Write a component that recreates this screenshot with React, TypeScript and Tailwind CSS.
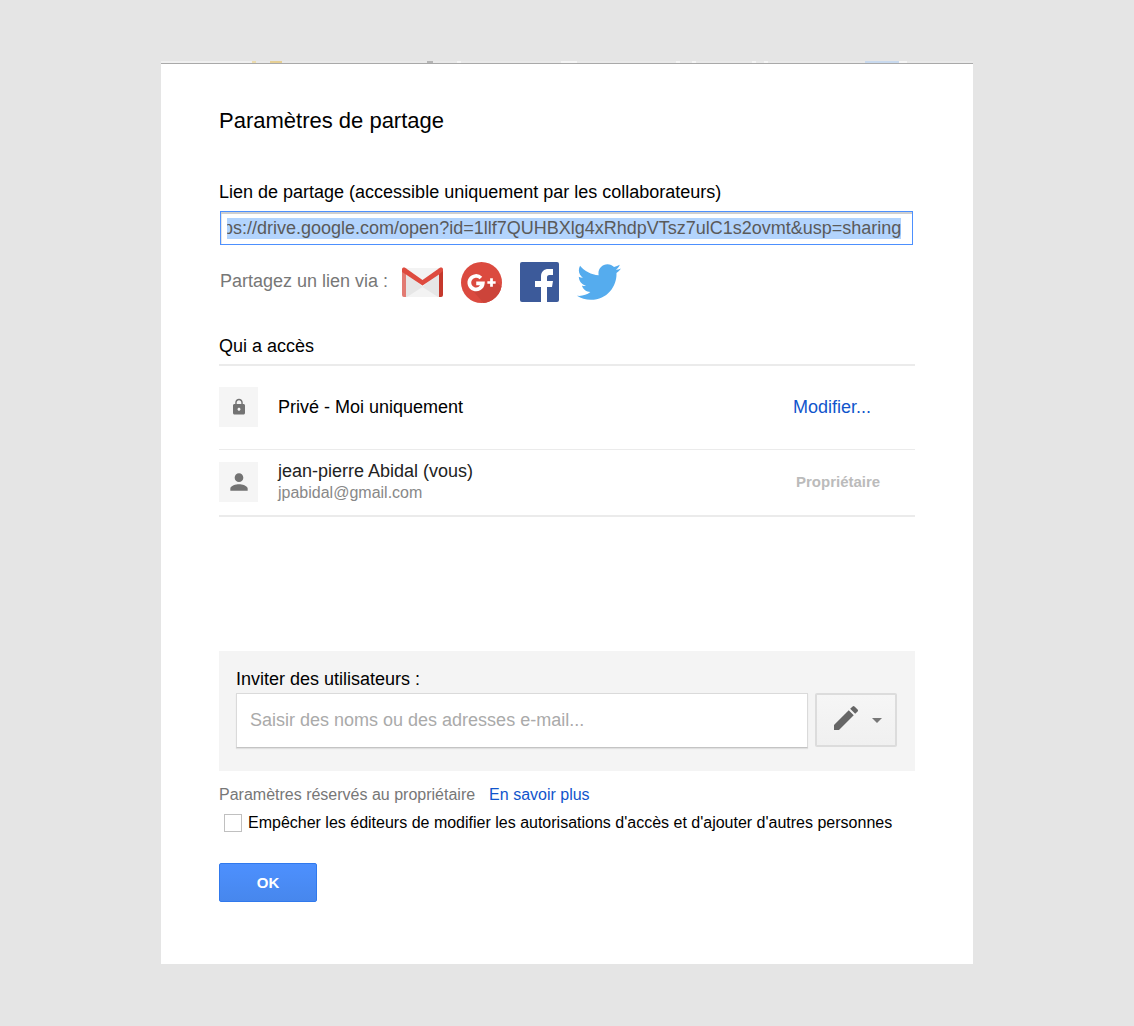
import React, { useEffect, useRef } from "react";
import { FaTwitter } from "react-icons/fa";
import { MdEdit, MdLock, MdPerson } from "react-icons/md";

const shareUrl =
  "ps://drive.google.com/open?id=1llf7QUHBXlg4xRhdpVTsz7ulC1s2ovmt&usp=sharing";

function GmailIcon() {
  return (
    <svg viewBox="0 0 41 30" className="h-[30px] w-[41px]" aria-hidden="true">
      <rect x="1" y="1" width="39" height="29" rx="1" fill="#e6e6e6" />
      <path d="M5 30 20.500 20 36 30z" fill="#f3f3f3" />
      <path d="M5 6 20.500 20 36 6V1H5z" fill="#f3f3f3" />
      <path d="M0 2v26a2 2 0 0 0 2 2h2V5z" fill="#e27b73" />
      <path d="M41 2v26a2 2 0 0 1-2 2h-2V5z" fill="#c5382c" />
      <path
        d="M0 2.500C0 .5 2 0 3.500 1L20.500 13 37.500 1C39 0 41 .5 41 2.500V4L37 7.500 20.500 18.500 4 7.500 0 5z"
        fill="#de4b3f"
      />
    </svg>
  );
}

function GooglePlusIcon() {
  return (
    <svg viewBox="0 0 42 42" className="h-[41px] w-[41px]" aria-hidden="true">
      <circle cx="21" cy="21" r="21" fill="#db4a3f" />
      <path d="m10 27 13 14.900A21 21 0 0 0 41.500 25l-6-5z" fill="#cc443a" />
      <path
        d="M20.400 16.400A6.900 6.900 0 1 0 22.300 22H15.600"
        fill="none"
        stroke="#fff"
        strokeWidth="3.800"
      />
      <path d="M27 21h8.500M31.250 16.750v8.500" stroke="#fff" strokeWidth="2.800" />
    </svg>
  );
}

function FacebookIcon() {
  return (
    <svg viewBox="0 0 39 40" className="h-10 w-[39px]" aria-hidden="true">
      <rect width="39" height="40" rx="2" fill="#3c5a9a" />
      <path
        d="M21 40V25h-6v-6h6v-4.500C21 9.500 24 7 28.500 7H33v6h-3.500c-2 0-2.500 1-2.500 2.500V19h6l-1 6h-5v15z"
        fill="#fff"
      />
    </svg>
  );
}

// Slice of the page still visible above the dialog
function PageSliver() {
  return (
    <div className="flex h-0.5 overflow-hidden bg-[#e9e9e9]" aria-hidden="true">
      <span className="w-[91px] bg-[#f0f0f0]" />
      <span className="w-1 bg-[#ecdcae]" />
      <span className="ml-3.5 w-3 bg-[#e6cf94]" />
      <span className="ml-[145px] w-1.5 bg-[#b5b5b5]" />
      <span className="ml-6 w-1 bg-[#f5f5f5]" />
      <span className="ml-[100px] w-4 bg-[#f5f5f5]" />
      <span className="ml-[99px] w-1 bg-[#f5f5f5]" />
      <span className="ml-3 w-1 bg-[#f5f5f5]" />
      <span className="ml-14 w-1 bg-[#f5f5f5]" />
      <span className="ml-2 w-1 bg-[#f5f5f5]" />
      <span className="ml-[97px] w-[34px] bg-[#c8d9ee]" />
      <span className="w-2 bg-[#f5f5f5]" />
    </div>
  );
}

export default function App() {
  const linkRef = useRef<HTMLInputElement>(null);

  useEffect(() => {
    linkRef.current?.focus();
    linkRef.current?.select();
  }, []);

  return (
    <div className="min-h-screen bg-[#e5e5e5] py-[61px] font-['Liberation_Sans',Arial,sans-serif] text-[18px] leading-6 text-black">
      <main className="mx-auto w-full max-w-[812px]">
        <PageSliver />
        <div className="border-t border-[#a9a9a9] bg-white px-[58px] pt-[43px] pb-[62px]">
          <h1 className="text-[22px] leading-7">Paramètres de partage</h1>

          <label htmlFor="link" className="mt-[45px] block">
            Lien de partage (accessible uniquement par les collaborateurs)
          </label>
          <div className="mt-[7px] pr-0.5 pl-px">
            <input
              id="link"
              ref={linkRef}
              readOnly
              value={shareUrl}
              className="block h-[34px] w-full border border-[#4d90fe] pr-[11px] pl-1.5 text-[#5a5a5a] shadow-[inset_0_2px_0_#cfcfcf,inset_1px_0_0_#e4e4e4] outline-none selection:bg-[#b3d4fd] selection:text-[#5a5a5a]"
            />
          </div>

          <div className="mt-4 flex h-[42px] items-center pl-px">
            <span className="w-[182px] pb-0.5 text-[#777]">Partagez un lien via :</span>
            <div className="flex items-center gap-[18px]">
              <a href="#gmail" aria-label="Gmail">
                <GmailIcon />
              </a>
              <a href="#google-plus" aria-label="Google+">
                <GooglePlusIcon />
              </a>
              <a href="#facebook" aria-label="Facebook">
                <FacebookIcon />
              </a>
              <a href="#twitter" aria-label="Twitter">
                <FaTwitter className="h-11 w-11 text-[#55acee]" />
              </a>
            </div>
          </div>

          <h2 className="mt-[31px] border-b-2 border-[#ebebeb] pb-1.5">Qui a accès</h2>
          <ul>
            <li className="flex h-[84px] items-center border-b border-[#ebebeb] pb-px">
              <span className="flex h-10 w-[39px] items-center justify-center bg-[#f5f5f5]">
                <MdLock className="h-[18px] w-[18px] text-[#737373]" />
              </span>
              <span className="ml-5 flex-1">Privé - Moi uniquement</span>
              <a href="#modifier" className="w-[122px] text-[#1155cc]">
                Modifier...
              </a>
            </li>
            <li className="flex h-[67px] items-center border-b-2 border-[#ebebeb] pb-px">
              <span className="flex h-10 w-[39px] items-center justify-center bg-[#f5f5f5]">
                <MdPerson className="h-[26px] w-[26px] text-[#737373]" />
              </span>
              <div className="ml-5 flex-1 leading-[22px]">
                <p className="text-[#222]">jean-pierre Abidal (vous)</p>
                <p className="text-[16px] text-[#888]">jpabidal@gmail.com</p>
              </div>
              <span className="w-[119px] text-[15px] font-bold text-[#bbb]">Propriétaire</span>
            </li>
          </ul>

          <div className="mt-[134px] bg-[#f4f4f4] pt-4 pr-[18px] pb-[23px] pl-[17px]">
            <label htmlFor="invite" className="block">
              Inviter des utilisateurs :
            </label>
            <div className="mt-0.5 flex items-start gap-[7px]">
              <input
                id="invite"
                placeholder="Saisir des noms ou des adresses e-mail..."
                className="h-[55px] min-w-0 flex-1 border border-[#dadada] border-b-[#c4c4c4] bg-white px-[13px] shadow-[0_1px_1px_#e0e0e0] placeholder:text-[#aaa]"
              />
              <button
                aria-label="Peut modifier"
                className="flex h-[54px] w-[82px] items-center justify-center gap-2.5 rounded-xs border-2 border-[#dcdcdc] bg-linear-to-b from-[#f6f6f6] to-[#f0f0f0]"
              >
                <MdEdit className="mb-1 h-8 w-8 text-[#666]" />
                <svg viewBox="0 0 10 5" className="h-[5px] w-2.5" aria-hidden="true">
                  <path d="M0 0h10L5 5z" fill="#777" />
                </svg>
              </button>
            </div>
          </div>

          <p className="mt-3 text-[16px] text-[#777]">
            Paramètres réservés au propriétaire
            <a href="#savoir-plus" className="ml-3.5 text-[#1155cc]">
              En savoir plus
            </a>
          </p>
          <label className="mt-1 flex items-center gap-[6px] pl-[5px] text-[16px]">
            <input
              type="checkbox"
              className="h-[18px] w-[18px] appearance-none border border-[#c0c0c0] bg-white"
            />
            Empêcher les éditeurs de modifier les autorisations d'accès et d'ajouter d'autres personnes
          </label>

          <button className="mt-7 h-[39px] w-[98px] rounded-xs border border-[#3079ed] bg-linear-to-b from-[#4d90fe] to-[#4787ed] text-[15px] font-bold text-white">
            OK
          </button>
        </div>
      </main>
    </div>
  );
}
